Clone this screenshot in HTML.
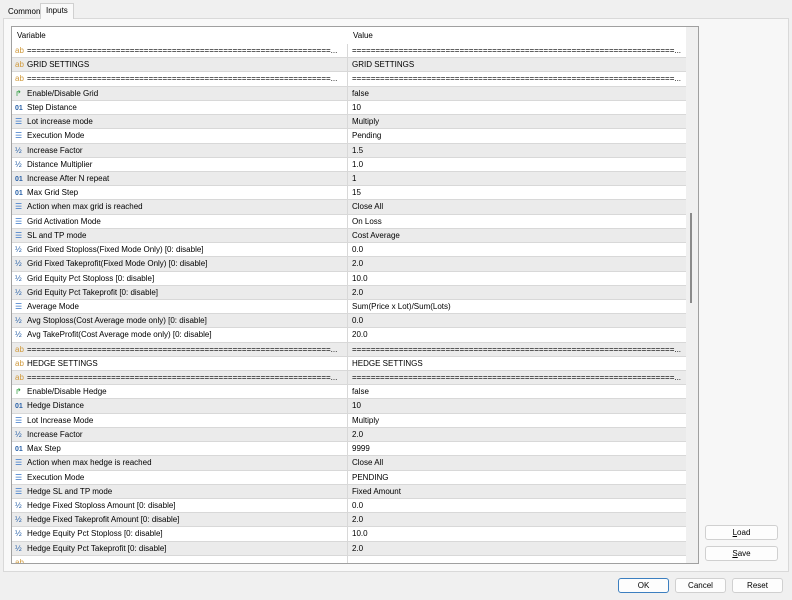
<!DOCTYPE html>
<html><head><meta charset="utf-8"><style>
*{margin:0;padding:0;box-sizing:border-box}
body{width:792px;height:600px;background:#f0f0f0;font-family:"Liberation Sans",Tahoma,sans-serif;font-size:8px;color:#000;position:relative;overflow:hidden}
.tab{position:absolute;top:5px;height:14px;line-height:13px;padding:0 5px;font-size:8px}
#t2{left:40px;top:3px;height:16px;background:#f9f9f9;border:1px solid #d0d0d0;border-bottom:none}
.panel{position:absolute;left:3px;top:18px;width:786px;height:554px;background:#f9f9f9;border:1px solid #d9d9d9}
.grid{position:absolute;left:11px;top:26px;width:688px;height:538px;border:1px solid #a0a0a0;background:#fff;overflow:hidden}
.hdr{position:absolute;left:0;top:0;width:686px;height:17px;background:#fff;line-height:17px}
.hdr span{position:absolute;top:0}
.rows{position:absolute;left:0;top:17px;width:675px}
.r{height:14.23px;line-height:13px;border-bottom:1px solid #d8d8d8;position:relative;white-space:nowrap}
.r:nth-child(even){background:#ebebeb}
.r .a{position:absolute;left:3px;top:0}
.r .b{position:absolute;left:340px;top:0}
.r .sep{position:absolute;left:335px;top:0;width:1px;height:14px;background:#d8d8d8}
.i{display:inline-block;width:12px;font-size:8px}
.ab{color:#d09a3c}
.n{color:#2a62a8;font-weight:bold;font-size:7px}
.f{color:#2a62a8}
.sb{position:absolute;left:674px;top:0;width:12px;height:536px;background:#f0f0f0}
.th{position:absolute;left:4px;top:186px;width:2px;height:90px;background:#8a8a8a}
.side{position:absolute;left:699px;top:19px;width:89px;height:552px;background:#f7f7f7}
.btn{position:absolute;height:15px;background:#fdfdfd;border:1px solid #d0d0d0;border-radius:3px;text-align:center;line-height:13px;font-size:8px}
</style></head><body>
<div class="panel"></div>
<div class="tab" style="left:3px">Common</div>
<div class="tab" id="t2">Inputs</div>
<div class="side"></div>
<div class="grid">
<div class="hdr"><span style="left:5px">Variable</span><span style="left:341px">Value</span></div>
<div class="rows">
<div class="r"><span class="a"><span class="i ab">ab</span>=================================================================...</span><i class="sep"></i><span class="b">=====================================================================...</span></div>
<div class="r"><span class="a"><span class="i ab">ab</span>GRID SETTINGS</span><i class="sep"></i><span class="b">GRID SETTINGS</span></div>
<div class="r"><span class="a"><span class="i ab">ab</span>=================================================================...</span><i class="sep"></i><span class="b">=====================================================================...</span></div>
<div class="r"><span class="a"><span class="i" style="color:#2a9a3a">↱</span>Enable/Disable Grid</span><i class="sep"></i><span class="b">false</span></div>
<div class="r"><span class="a"><span class="i n">01</span>Step Distance</span><i class="sep"></i><span class="b">10</span></div>
<div class="r"><span class="a"><span class="i" style="color:#3b78c8">☰</span>Lot increase mode</span><i class="sep"></i><span class="b">Multiply</span></div>
<div class="r"><span class="a"><span class="i" style="color:#3b78c8">☰</span>Execution Mode</span><i class="sep"></i><span class="b">Pending</span></div>
<div class="r"><span class="a"><span class="i f">½</span>Increase Factor</span><i class="sep"></i><span class="b">1.5</span></div>
<div class="r"><span class="a"><span class="i f">½</span>Distance Multiplier</span><i class="sep"></i><span class="b">1.0</span></div>
<div class="r"><span class="a"><span class="i n">01</span>Increase After N repeat</span><i class="sep"></i><span class="b">1</span></div>
<div class="r"><span class="a"><span class="i n">01</span>Max Grid Step</span><i class="sep"></i><span class="b">15</span></div>
<div class="r"><span class="a"><span class="i" style="color:#3b78c8">☰</span>Action when max grid is reached</span><i class="sep"></i><span class="b">Close All</span></div>
<div class="r"><span class="a"><span class="i" style="color:#3b78c8">☰</span>Grid Activation Mode</span><i class="sep"></i><span class="b">On Loss</span></div>
<div class="r"><span class="a"><span class="i" style="color:#3b78c8">☰</span>SL and TP mode</span><i class="sep"></i><span class="b">Cost Average</span></div>
<div class="r"><span class="a"><span class="i f">½</span>Grid Fixed Stoploss(Fixed Mode Only) [0: disable]</span><i class="sep"></i><span class="b">0.0</span></div>
<div class="r"><span class="a"><span class="i f">½</span>Grid Fixed Takeprofit(Fixed Mode Only) [0: disable]</span><i class="sep"></i><span class="b">2.0</span></div>
<div class="r"><span class="a"><span class="i f">½</span>Grid Equity Pct Stoploss [0: disable]</span><i class="sep"></i><span class="b">10.0</span></div>
<div class="r"><span class="a"><span class="i f">½</span>Grid Equity Pct Takeprofit [0: disable]</span><i class="sep"></i><span class="b">2.0</span></div>
<div class="r"><span class="a"><span class="i" style="color:#3b78c8">☰</span>Average Mode</span><i class="sep"></i><span class="b">Sum(Price x Lot)/Sum(Lots)</span></div>
<div class="r"><span class="a"><span class="i f">½</span>Avg Stoploss(Cost Average mode only) [0: disable]</span><i class="sep"></i><span class="b">0.0</span></div>
<div class="r"><span class="a"><span class="i f">½</span>Avg TakeProfit(Cost Average mode only) [0: disable]</span><i class="sep"></i><span class="b">20.0</span></div>
<div class="r"><span class="a"><span class="i ab">ab</span>=================================================================...</span><i class="sep"></i><span class="b">=====================================================================...</span></div>
<div class="r"><span class="a"><span class="i ab">ab</span>HEDGE SETTINGS</span><i class="sep"></i><span class="b">HEDGE SETTINGS</span></div>
<div class="r"><span class="a"><span class="i ab">ab</span>=================================================================...</span><i class="sep"></i><span class="b">=====================================================================...</span></div>
<div class="r"><span class="a"><span class="i" style="color:#2a9a3a">↱</span>Enable/Disable Hedge</span><i class="sep"></i><span class="b">false</span></div>
<div class="r"><span class="a"><span class="i n">01</span>Hedge Distance</span><i class="sep"></i><span class="b">10</span></div>
<div class="r"><span class="a"><span class="i" style="color:#3b78c8">☰</span>Lot Increase Mode</span><i class="sep"></i><span class="b">Multiply</span></div>
<div class="r"><span class="a"><span class="i f">½</span>Increase Factor</span><i class="sep"></i><span class="b">2.0</span></div>
<div class="r"><span class="a"><span class="i n">01</span>Max Step</span><i class="sep"></i><span class="b">9999</span></div>
<div class="r"><span class="a"><span class="i" style="color:#3b78c8">☰</span>Action when max hedge is reached</span><i class="sep"></i><span class="b">Close All</span></div>
<div class="r"><span class="a"><span class="i" style="color:#3b78c8">☰</span>Execution Mode</span><i class="sep"></i><span class="b">PENDING</span></div>
<div class="r"><span class="a"><span class="i" style="color:#3b78c8">☰</span>Hedge SL and TP mode</span><i class="sep"></i><span class="b">Fixed Amount</span></div>
<div class="r"><span class="a"><span class="i f">½</span>Hedge Fixed Stoploss Amount [0: disable]</span><i class="sep"></i><span class="b">0.0</span></div>
<div class="r"><span class="a"><span class="i f">½</span>Hedge Fixed Takeprofit Amount [0: disable]</span><i class="sep"></i><span class="b">2.0</span></div>
<div class="r"><span class="a"><span class="i f">½</span>Hedge Equity Pct Stoploss [0: disable]</span><i class="sep"></i><span class="b">10.0</span></div>
<div class="r"><span class="a"><span class="i f">½</span>Hedge Equity Pct Takeprofit [0: disable]</span><i class="sep"></i><span class="b">2.0</span></div>
<div class="r"><span class="a"><span class="i ab">ab</span></span><i class="sep"></i></div>
</div>
<div class="sb"><div class="th"></div></div>
</div>
<div class="btn" style="left:705px;top:525px;width:73px"><u>L</u>oad</div>
<div class="btn" style="left:705px;top:546px;width:73px"><u>S</u>ave</div>
<div class="btn" style="left:618px;top:578px;width:51px;border-color:#3c7fc0">OK</div>
<div class="btn" style="left:675px;top:578px;width:51px">Cancel</div>
<div class="btn" style="left:732px;top:578px;width:51px">Reset</div>
</body></html>
